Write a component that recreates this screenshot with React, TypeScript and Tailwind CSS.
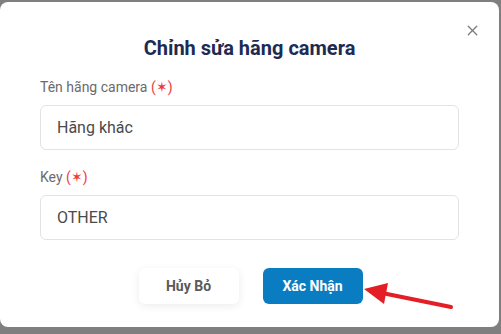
import { X } from 'lucide-react';

function Field({ label, value }: { label: string; value: string }) {
  return (
    <div className="flex flex-col">
      <label className="text-[14px] leading-5 text-[#6b6b6b]">
        {label} <span className="text-[#ef3b3b]">(✶)</span>
      </label>
      <div className="mt-[8px] flex h-[45px] w-[419px] items-center rounded-md border border-[#e3e3e3] bg-white px-4 text-[16px] text-[#4a4a4a]">
        {value}
      </div>
    </div>
  );
}

export default function App() {
  return (
    <div
      className="relative h-[334px] w-[501px] overflow-hidden bg-[#7f7f7f] pt-[2px]"
      style={{ fontFamily: 'Roboto, "Noto Sans", sans-serif' }}
    >
      {/* Modal */}
      <div className="relative h-[325px] w-[499px] rounded-lg bg-white px-10 pt-8">
        <button type="button" className="absolute right-[18px] top-[20px] text-[#7a7a7a]">
          <X className="h-[17px] w-[17px]" strokeWidth={1.8} />
        </button>

        <h2 className="text-center text-[20px] font-bold leading-7 text-[#1d2b53]">
          Chỉnh sửa hãng camera
        </h2>

        <div className="mt-[15px] flex flex-col gap-[17px]">
          <Field label="Tên hãng camera" value="Hãng khác" />
          <Field label="Key" value="OTHER" />
        </div>

        {/* Footer buttons */}
        <div className="mt-[28px] flex justify-center gap-6 pl-[2px]">
          <button
            type="button"
            className="h-9 w-[100px] rounded-md bg-white text-[14px] font-bold text-[#5a5a5a] shadow-[0_2px_8px_rgba(0,0,0,0.08)]"
          >
            Hủy Bỏ
          </button>
          <button
            type="button"
            className="h-9 w-[100px] rounded-md bg-[#0a7dc2] text-[14px] font-bold text-white"
          >
            Xác Nhận
          </button>
        </div>
      </div>

      {/* Red annotation arrow */}
      <svg className="pointer-events-none absolute left-0 top-0" width="501" height="334">
        <line x1="451" y1="307" x2="382" y2="293" stroke="#e31e24" strokeWidth="4" strokeLinecap="round" />
        <polygon points="364,289 388,283 384,304" fill="#e31e24" />
      </svg>
    </div>
  );
}
